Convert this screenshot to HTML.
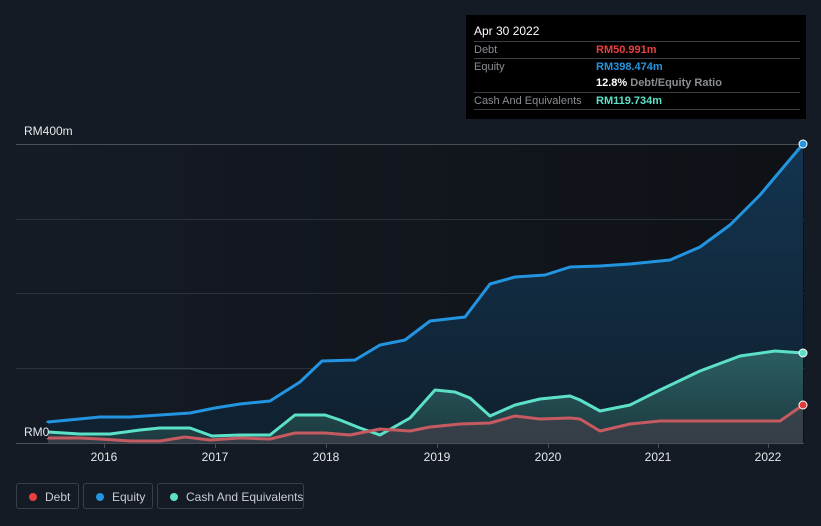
<!DOCTYPE html>
<html><head><meta charset="utf-8"><style>
body{margin:0;width:821px;height:526px;background:#151b24;font-family:"Liberation Sans",sans-serif;overflow:hidden;position:relative}
.tt{position:absolute;left:466px;top:15px;width:340px;height:104px;background:#000;color:#fff;font-size:11px}
.tt .h{position:absolute;left:8px;top:9px;font-size:12px}
.row{position:absolute;left:8px;width:326px;height:17px;line-height:17px;border-top:1px solid #3a3d44;color:#8a8d93;white-space:nowrap}
.row span{position:absolute;left:122px;top:0;font-weight:bold}
.leg{position:absolute;top:483px;height:26px;border:1px solid #3a404b;border-radius:3px;color:#c9ccd1;font-size:12px;line-height:26px;box-sizing:border-box;white-space:nowrap}
.leg i{position:absolute;left:12px;top:9px;width:8px;height:8px;border-radius:50%}
.leg b{font-weight:normal;position:absolute;left:28px;top:0}
</style></head><body>
<svg width="821" height="526" style="position:absolute;left:0;top:0">
<defs>
<linearGradient id="bg" x1="0" x2="1"><stop offset="0" stop-color="#151b24"/><stop offset="1" stop-color="#0e1116"/></linearGradient>
<linearGradient id="eq" x1="0" y1="0" x2="0" y2="1"><stop offset="0" stop-color="#13344f"/><stop offset="1" stop-color="#10202f"/></linearGradient>
<linearGradient id="ca" x1="0" y1="0" x2="0" y2="1"><stop offset="0" stop-color="#2b5e60"/><stop offset="1" stop-color="#1c3a40"/></linearGradient>
</defs>
<rect x="48" y="144" width="756" height="299" fill="url(#bg)"/>
<g stroke="#2c313a" stroke-width="1"><line x1="16" x2="804" y1="144.5" y2="144.5" stroke="#4a4e56"/><line x1="16" x2="804" y1="219.5" y2="219.5"/><line x1="16" x2="804" y1="293.5" y2="293.5"/><line x1="16" x2="804" y1="368.5" y2="368.5"/></g>
<polygon fill="url(#eq)" points="48,443 48,422 100,417 130,417 160,415 190,413 215,408 240,404 270,401 300,382 322,361 355,360 380,345 405,340 430,321 465,317 490,284 515,277 545,275 570,267 600,266 630,264 670,260 700,247 730,225 760,195 803,144 803,443"/>
<polygon fill="url(#ca)" points="48,443 48,432 80,434 110,434 140,430 160,428 190,428 212,436 240,435 270,435 295,415 325,415 340,420 360,428 380,435 410,418 435,390 455,392 470,398 490,416 515,405 540,399 570,396 580,400 600,411 630,405 660,390 700,371 740,356 775,351 803,353 803,443"/>
<polygon fill="#3c4048" opacity="0.8" points="48,443 48,438 80,438 100,439 130,441 160,441 185,437 210,440 240,438 270,439 295,433 325,433 350,435 380,429 410,431 430,427 460,424 490,423 515,416 540,419 570,418 580,419 600,431 630,424 660,421 700,421 780,421 803,405 803,443"/>
<g fill="none" stroke-width="3" stroke-linejoin="round" stroke-linecap="round">
<polyline stroke="#2394e0" points="48,422 100,417 130,417 160,415 190,413 215,408 240,404 270,401 300,382 322,361 355,360 380,345 405,340 430,321 465,317 490,284 515,277 545,275 570,267 600,266 630,264 670,260 700,247 730,225 760,195 803,144"/>
<polyline stroke="#5ce0c8" points="48,432 80,434 110,434 140,430 160,428 190,428 212,436 240,435 270,435 295,415 325,415 340,420 360,428 380,435 410,418 435,390 455,392 470,398 490,416 515,405 540,399 570,396 580,400 600,411 630,405 660,390 700,371 740,356 775,351 803,353"/>
<polyline stroke="#c55a60" points="48,438 80,438 100,439 130,441 160,441 185,437 210,440 240,438 270,439 295,433 325,433 350,435 380,429 410,431 430,427 460,424 490,423 515,416 540,419 570,418 580,419 600,431 630,424 660,421 700,421 780,421 803,405"/>
</g>
<circle cx="803" cy="144" r="4" fill="#2394e0" stroke="#fff" stroke-width="1"/>
<circle cx="803" cy="353" r="4" fill="#5ce0c8" stroke="#fff" stroke-width="1"/>
<circle cx="803" cy="405" r="4" fill="#e03c3c" stroke="#fff" stroke-width="1"/>
<line x1="16" x2="804" y1="443.5" y2="443.5" stroke="#4a4e56"/>
<g stroke="#4a4e56"><line x1="104.5" x2="104.5" y1="443" y2="448"/><line x1="215.5" x2="215.5" y1="443" y2="448"/><line x1="326.5" x2="326.5" y1="443" y2="448"/><line x1="437.5" x2="437.5" y1="443" y2="448"/><line x1="548.5" x2="548.5" y1="443" y2="448"/><line x1="658.5" x2="658.5" y1="443" y2="448"/><line x1="768.5" x2="768.5" y1="443" y2="448"/></g>
<rect x="18" y="423" width="30" height="15" fill="#151b24"/>
<g fill="#e6e8ea" font-size="12" font-family="Liberation Sans" text-anchor="middle">
<text x="104" y="461">2016</text><text x="215" y="461">2017</text><text x="326" y="461">2018</text><text x="437" y="461">2019</text><text x="548" y="461">2020</text><text x="658" y="461">2021</text><text x="768" y="461">2022</text>
<text x="24" y="436" text-anchor="start">RM0</text>
<text x="24" y="135" text-anchor="start">RM400m</text>
</g>
</svg>
<div class="tt"><div class="h">Apr 30 2022</div>
<div class="row" style="top:26px">Debt<span style="color:#e8403f">RM50.991m</span></div>
<div class="row" style="top:43px">Equity<span style="color:#2394e0">RM398.474m</span></div>
<div class="row" style="top:60px;border-top:none"><span style="color:#fff">12.8% <b style="color:#8a8d93">Debt/Equity Ratio</b></span></div>
<div class="row" style="top:77px">Cash And Equivalents<span style="color:#5ce0c8">RM119.734m</span></div>
<div class="row" style="top:94px;height:0"></div>
</div>
<div class="leg" style="left:16px;width:63px"><i style="background:#e8403f"></i><b>Debt</b></div>
<div class="leg" style="left:83px;width:70px"><i style="background:#2394e0"></i><b>Equity</b></div>
<div class="leg" style="left:157px;width:147px"><i style="background:#5ce0c8"></i><b>Cash And Equivalents</b></div>
</body></html>
